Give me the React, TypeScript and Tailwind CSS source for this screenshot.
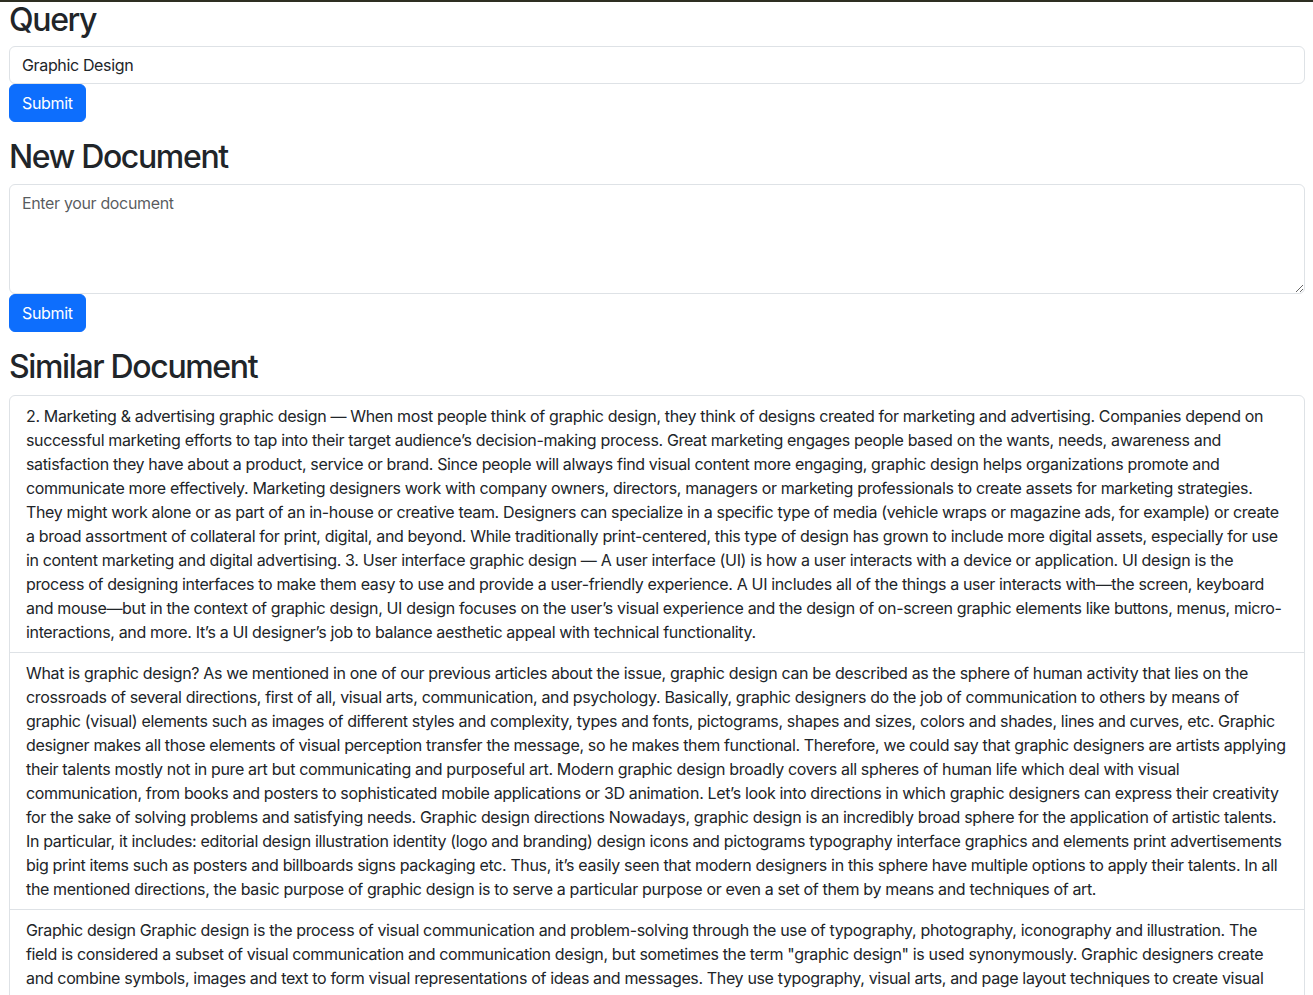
import { useState } from "react";

const results = [
  "2. Marketing & advertising graphic design — When most people think of graphic design, they think of designs created for marketing and advertising. Companies depend on successful marketing efforts to tap into their target audience’s decision-making process. Great marketing engages people based on the wants, needs, awareness and satisfaction they have about a product, service or brand. Since people will always find visual content more engaging, graphic design helps organizations promote and communicate more effectively. Marketing designers work with company owners, directors, managers or marketing professionals to create assets for marketing strategies. They might work alone or as part of an in-house or creative team. Designers can specialize in a specific type of media (vehicle wraps or magazine ads, for example) or create a broad assortment of collateral for print, digital, and beyond. While traditionally print-centered, this type of design has grown to include more digital assets, especially for use in content marketing and digital advertising. 3. User interface graphic design — A user interface (UI) is how a user interacts with a device or application. UI design is the process of designing interfaces to make them easy to use and provide a user-friendly experience. A UI includes all of the things a user interacts with—the screen, keyboard and mouse—but in the context of graphic design, UI design focuses on the user’s visual experience and the design of on-screen graphic elements like buttons, menus, micro-interactions, and more. It’s a UI designer’s job to balance aesthetic appeal with technical functionality.",
  "What is graphic design? As we mentioned in one of our previous articles about the issue, graphic design can be described as the sphere of human activity that lies on the crossroads of several directions, first of all, visual arts, communication, and psychology. Basically, graphic designers do the job of communication to others by means of graphic (visual) elements such as images of different styles and complexity, types and fonts, pictograms, shapes and sizes, colors and shades, lines and curves, etc. Graphic designer makes all those elements of visual perception transfer the message, so he makes them functional. Therefore, we could say that graphic designers are artists applying their talents mostly not in pure art but communicating and purposeful art. Modern graphic design broadly covers all spheres of human life which deal with visual communication, from books and posters to sophisticated mobile applications or 3D animation. Let’s look into directions in which graphic designers can express their creativity for the sake of solving problems and satisfying needs. Graphic design directions Nowadays, graphic design is an incredibly broad sphere for the application of artistic talents. In particular, it includes: editorial design illustration identity (logo and branding) design icons and pictograms typography interface graphics and elements print advertisements big print items such as posters and billboards signs packaging etc. Thus, it’s easily seen that modern designers in this sphere have multiple options to apply their talents. In all the mentioned directions, the basic purpose of graphic design is to serve a particular purpose or even a set of them by means and techniques of art.",
  "Graphic design Graphic design is the process of visual communication and problem-solving through the use of typography, photography, iconography and illustration. The field is considered a subset of visual communication and communication design, but sometimes the term \"graphic design\" is used synonymously. Graphic designers create and combine symbols, images and text to form visual representations of ideas and messages. They use typography, visual arts, and page layout techniques to create visual compositions. Common uses of graphic design include corporate design (logos and branding), editorial design (magazines, newspapers and books), wayfinding or environmental design, advertising, web design, communication design, product packaging, and signage.",
];

const btn =
  "rounded-[6px] bg-[#0d6efd] px-3 py-[6px] text-base leading-6 text-white border border-[#0d6efd]";
const field =
  "block w-full rounded-[6px] border border-[#dee2e6] bg-white px-3 py-[6px] text-base leading-6 text-[#212529] outline-none placeholder:text-[rgba(33,37,41,0.75)]";
const heading = "mb-2 text-[32px] font-medium tracking-[-1.35px]";

export default function App() {
  const [query, setQuery] = useState("Graphic Design");
  const [doc, setDoc] = useState("");

  return (
    <div
      className="min-h-screen bg-white tracking-[-0.35px] text-[#212529]"
      style={{ fontFamily: "Inter, 'Liberation Sans', sans-serif" }}
    >
      <div className="h-[2px] bg-[#2e2f22]" />
      <div className="pl-[9px] pr-[8px]">
        <h2 className={`${heading} leading-[36px]`}>Query</h2>
        <input
          className={field}
          value={query}
          onChange={(e) => setQuery(e.target.value)}
        />
        <button type="button" className={btn}>
          Submit
        </button>

        <h2 className={`${heading} mt-4 leading-[38.4px]`}>New Document</h2>
        <textarea
          rows={4}
          className={field}
          placeholder="Enter your document"
          value={doc}
          onChange={(e) => setDoc(e.target.value)}
        />
        <button type="button" className={btn}>
          Submit
        </button>

        <h2 className={`${heading} mt-4 leading-[38.4px]`}>Similar Document</h2>
        <ul className="overflow-hidden rounded-[6px] border border-[#dee2e6]">
          {results.map((text, i) => (
            <li
              key={i}
              className="border-t border-[#dee2e6] px-4 py-2 text-base leading-6 first:border-t-0"
            >
              {text}
            </li>
          ))}
        </ul>
      </div>
    </div>
  );
}
